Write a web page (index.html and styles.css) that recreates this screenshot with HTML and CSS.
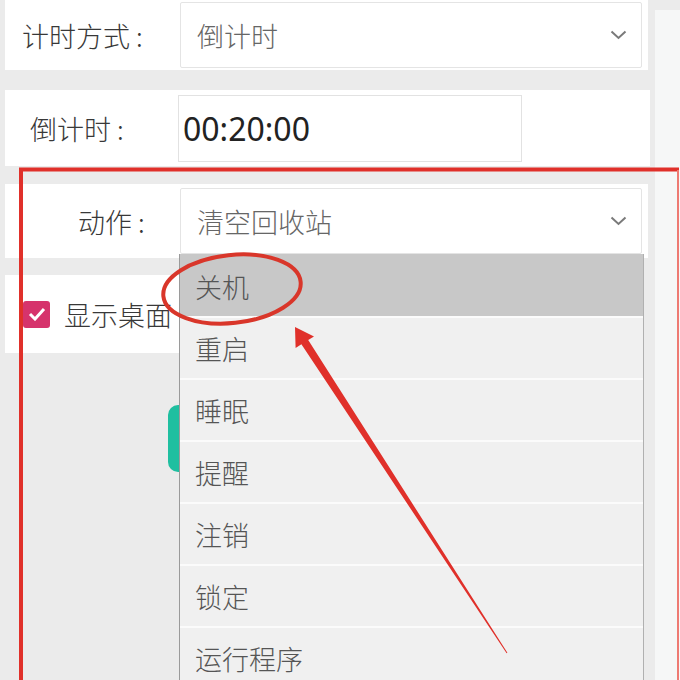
FILE: index.html
```html
<!DOCTYPE html>
<html lang="zh">
<head>
<meta charset="utf-8">
<title>定时设置</title>
<link rel="stylesheet" href="styles.css">
</head>
<body>
<div class="app">
  <div class="form">
    <div class="card row-mode">
      <label class="lbl lbl-mode">计时方式<span class="colon">:</span></label>
      <div class="select">
        <span>倒计时</span>
        <svg class="chev" width="17" height="10" viewBox="0 0 17 10"><polyline points="1.5,1.5 8.5,8 15.5,1.5" fill="none" stroke="#7a7a7a" stroke-width="2"/></svg>
      </div>
    </div>
    <div class="card row-time">
      <label class="lbl lbl-time">倒计时<span class="colon">:</span></label>
      <div class="input">00:20:00</div>
    </div>
    <div class="card row-action">
      <label class="lbl lbl-action">动作<span class="colon">:</span></label>
      <div class="select">
        <span>清空回收站</span>
        <svg class="chev" width="17" height="10" viewBox="0 0 17 10"><polyline points="1.5,1.5 8.5,8 15.5,1.5" fill="none" stroke="#7a7a7a" stroke-width="2"/></svg>
      </div>
    </div>
    <div class="card row-check">
      <span class="checkbox">
        <svg width="18" height="14" viewBox="0 0 18 14"><polyline points="2,7 7,12 16,2" fill="none" stroke="#fff" stroke-width="3"/></svg>
      </span>
      <span class="check-text">显示桌面</span>
    </div>
    <div class="teal"></div>
  </div>
  <div class="side"></div>
</div>

<ul class="dropdown">
  <li class="item active">关机</li>
  <li class="item">重启</li>
  <li class="item">睡眠</li>
  <li class="item">提醒</li>
  <li class="item">注销</li>
  <li class="item">锁定</li>
  <li class="item">运行程序</li>
</ul>

<svg class="annot" width="680" height="680" viewBox="0 0 680 680">
  <path d="M21 680 V169.5 H679" fill="none" stroke="#e0302a" stroke-width="4"/>
  <path d="M678 170 V680" fill="none" stroke="#ee7a72" stroke-width="2"/>
  <ellipse cx="232" cy="289" rx="69" ry="34" transform="rotate(-6 232 289)" fill="none" stroke="#d9362a" stroke-width="4"/>
  <polygon points="295,327 314,336.5 308.2,340 507.4,652.7 506.6,653.3 301.4,344.3 295.6,348" fill="#e0302a"/>
</svg>
</body>
</html>
```
FILE: styles.css
```css
* {
  box-sizing: border-box;
  margin: 0;
  padding: 0;
}

body {
  width: 680px;
  height: 680px;
  overflow: hidden;
  position: relative;
  background: #ebebeb;
  font-family: "Noto Sans CJK SC", "Noto Sans", sans-serif;
  font-weight: 300;
}

.app {
  display: flex;
  align-items: flex-start;
}

.form {
  width: 650px;
  display: flex;
  flex-direction: column;
}

.side {
  width: 30px;
  height: 680px;
  margin-top: 10px;
  margin-left: 5px;
  background: #f6f7f7;
}

.card {
  background: #ffffff;
  margin-left: 5px;
  display: flex;
  align-items: center;
}

.lbl {
  font-size: 27px;
  color: #383838;
  flex: none;
}

.colon {
  margin-left: 6px;
}

.row-mode {
  width: 643px;
  height: 70px;
  padding: 0 6px 0 17px;
}

.lbl-mode {
  width: 158px;
}

.select {
  flex: 1;
  height: 66px;
  border: 1px solid #e4e4e4;
  border-radius: 2px;
  display: flex;
  align-items: center;
  justify-content: space-between;
  padding: 0 14px 0 16px;
  font-size: 27px;
  color: #666666;
  background: #ffffff;
}

.chev {
  flex: none;
}

.row-time {
  margin-top: 20px;
  width: 645px;
  height: 76px;
  padding-left: 25px;
}

.lbl-time {
  width: 148px;
}

.input {
  width: 344px;
  height: 67px;
  border: 1px solid #e2e2e2;
  display: flex;
  align-items: center;
  padding-left: 4px;
  font-family: "Noto Sans", "Open Sans", sans-serif;
  font-weight: 400;
  font-size: 32px;
  color: #222222;
}

.row-action {
  margin-top: 18px;
  width: 643px;
  height: 74px;
  padding: 0 6px 0 73px;
}

.lbl-action {
  width: 102px;
}

.row-check {
  margin-top: 17px;
  width: 200px;
  height: 78px;
  padding-left: 18px;
  gap: 14px;
}

.checkbox {
  width: 27px;
  height: 27px;
  border-radius: 3px;
  background: #d6336c;
  display: flex;
  align-items: center;
  justify-content: center;
}

.check-text {
  font-size: 27px;
  color: #383838;
}

.teal {
  margin: 52px 0 0 168px;
  width: 60px;
  height: 67px;
  background: #1fbfa0;
  border-radius: 10px;
}

.dropdown {
  position: absolute;
  left: 179px;
  top: 254px;
  width: 465px;
  list-style: none;
  background: #f0f0f0;
  border-left: 1px solid #9a9a9a;
  border-right: 1px solid #b0b0b0;
}

.item {
  height: 62px;
  border-top: 2px solid #fbfbfb;
  display: flex;
  align-items: center;
  padding-left: 15px;
  font-size: 27px;
  color: #555555;
}

.item.active {
  background: #c8c8c8;
  border-top-color: #c8c8c8;
}

.annot {
  position: absolute;
  left: 0;
  top: 0;
  pointer-events: none;
}
```
